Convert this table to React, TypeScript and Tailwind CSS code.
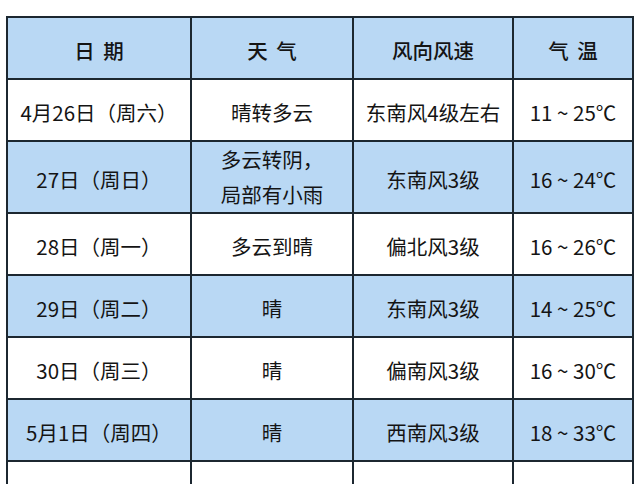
const rows: { date: string; weather: string[]; wind: string; temp: string }[] = [
  { date: '4月26日（周六）', weather: ['晴转多云'], wind: '东南风4级左右', temp: '11 ~ 25℃' },
  { date: '27日（周日）', weather: ['多云转阴，', '局部有小雨'], wind: '东南风3级', temp: '16 ~ 24℃' },
  { date: '28日（周一）', weather: ['多云到晴'], wind: '偏北风3级', temp: '16 ~ 26℃' },
  { date: '29日（周二）', weather: ['晴'], wind: '东南风3级', temp: '14 ~ 25℃' },
  { date: '30日（周三）', weather: ['晴'], wind: '偏南风3级', temp: '16 ~ 30℃' },
  { date: '5月1日（周四）', weather: ['晴'], wind: '西南风3级', temp: '18 ~ 33℃' },
  { date: '', weather: [''], wind: '', temp: '' },
]

const cell = 'border-2 border-[#1c2730] text-center align-middle px-0 pt-[4px] pb-0'

export default function App() {
  return (
    <div
      className="w-[640px] h-[484px] overflow-hidden bg-white pt-[16px] pl-[6px] text-[20.5px] text-[#141414]"
      style={{ fontFamily: '"Noto Sans CJK SC", "Noto Sans", sans-serif' }}
    >
      <table className="table-fixed border-collapse w-[628px]">
        <colgroup>
          <col className="w-[184px]" />
          <col className="w-[162px]" />
          <col className="w-[160px]" />
          <col className="w-[120px]" />
        </colgroup>
        <thead>
          <tr className="h-[62px] bg-[#b9d8f4]">
            <th className={`${cell} font-medium [word-spacing:0.2em]`}>日 期</th>
            <th className={`${cell} font-medium [word-spacing:0.2em]`}>天 气</th>
            <th className={`${cell} font-medium`}>风向风速</th>
            <th className={`${cell} font-medium [word-spacing:0.2em]`}>气 温</th>
          </tr>
        </thead>
        <tbody>
          {rows.map((r, i) => {
            const tall = r.weather.length > 1
            return (
              <tr key={i} className={`${tall ? 'h-[71px]' : 'h-[62px]'} ${i % 2 === 1 ? 'bg-[#b9d8f4]' : 'bg-white'}`}>
                <td className={cell}>{r.date}</td>
                <td className={`${cell} ${tall ? 'leading-[35px] !pt-0' : ''}`}>
                  {r.weather.map((w, j) => (
                    <div key={j}>{w}</div>
                  ))}
                </td>
                <td className={cell}>{r.wind}</td>
                <td className={cell}>{r.temp}</td>
              </tr>
            )
          })}
        </tbody>
      </table>
    </div>
  )
}
